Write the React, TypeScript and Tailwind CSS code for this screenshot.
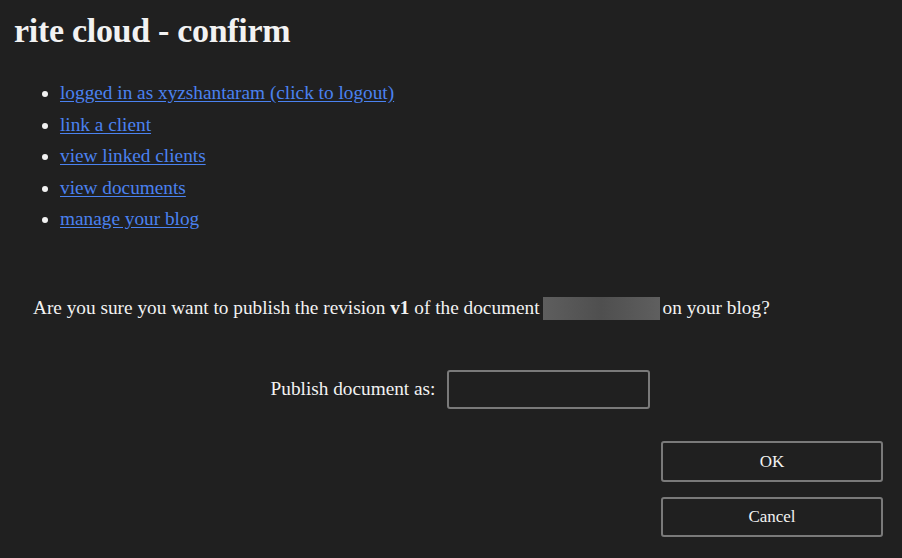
export default function App() {
  const links = [
    'logged in as xyzshantaram (click to logout)',
    'link a client',
    'view linked clients',
    'view documents',
    'manage your blog',
  ];

  return (
    <div className="min-h-screen w-full bg-[#202020] text-[#f2f2f2] font-['Liberation_Serif',serif] px-[14px] pt-[12px]">
      <h1 className="text-[34px] font-bold leading-[38px] tracking-[-0.3px]">rite cloud - confirm</h1>

      <ul className="mt-[33px] pl-[46px] list-disc text-[19.3px] leading-[20px] marker:text-[#f2f2f2]">
        {links.map((l) => (
          <li key={l} className="mb-[11.5px]">
            <a href="#" className="text-[#4b82f0] underline underline-offset-2">{l}</a>
          </li>
        ))}
      </ul>

      <p className="mt-[67px] pl-[19px] text-[19.3px] leading-[24px] flex items-center">
        <span>Are you sure you want to publish the revision <b>v1</b> of the document</span>
        <span className="inline-block mx-[3px] w-[117px] h-[23px] bg-gradient-to-r from-[#5e5e5e] via-[#4f4f4f] to-[#5f5f5f]" />
        <span>on your blog?</span>
      </p>

      <div className="mt-[50px] flex items-center justify-center gap-[12px] pl-[19px]">
        <label className="text-[19.3px]">Publish document as:</label>
        <input className="w-[203px] h-[39px] bg-[#202020] border-2 border-[#7a7a7a] rounded-[3px] outline-none text-[#f2f2f2] px-2" />
      </div>

      <div className="mt-[32px] flex flex-col items-end gap-[15px] pr-[5px]">
        <button className="w-[222px] h-[41px] border-2 border-[#7a7a7a] rounded-[3px] bg-[#202020] text-[17px] text-[#f2f2f2]">OK</button>
        <button className="w-[222px] h-[40px] border-2 border-[#7a7a7a] rounded-[3px] bg-[#202020] text-[17px] text-[#f2f2f2]">Cancel</button>
      </div>
    </div>
  );
}
